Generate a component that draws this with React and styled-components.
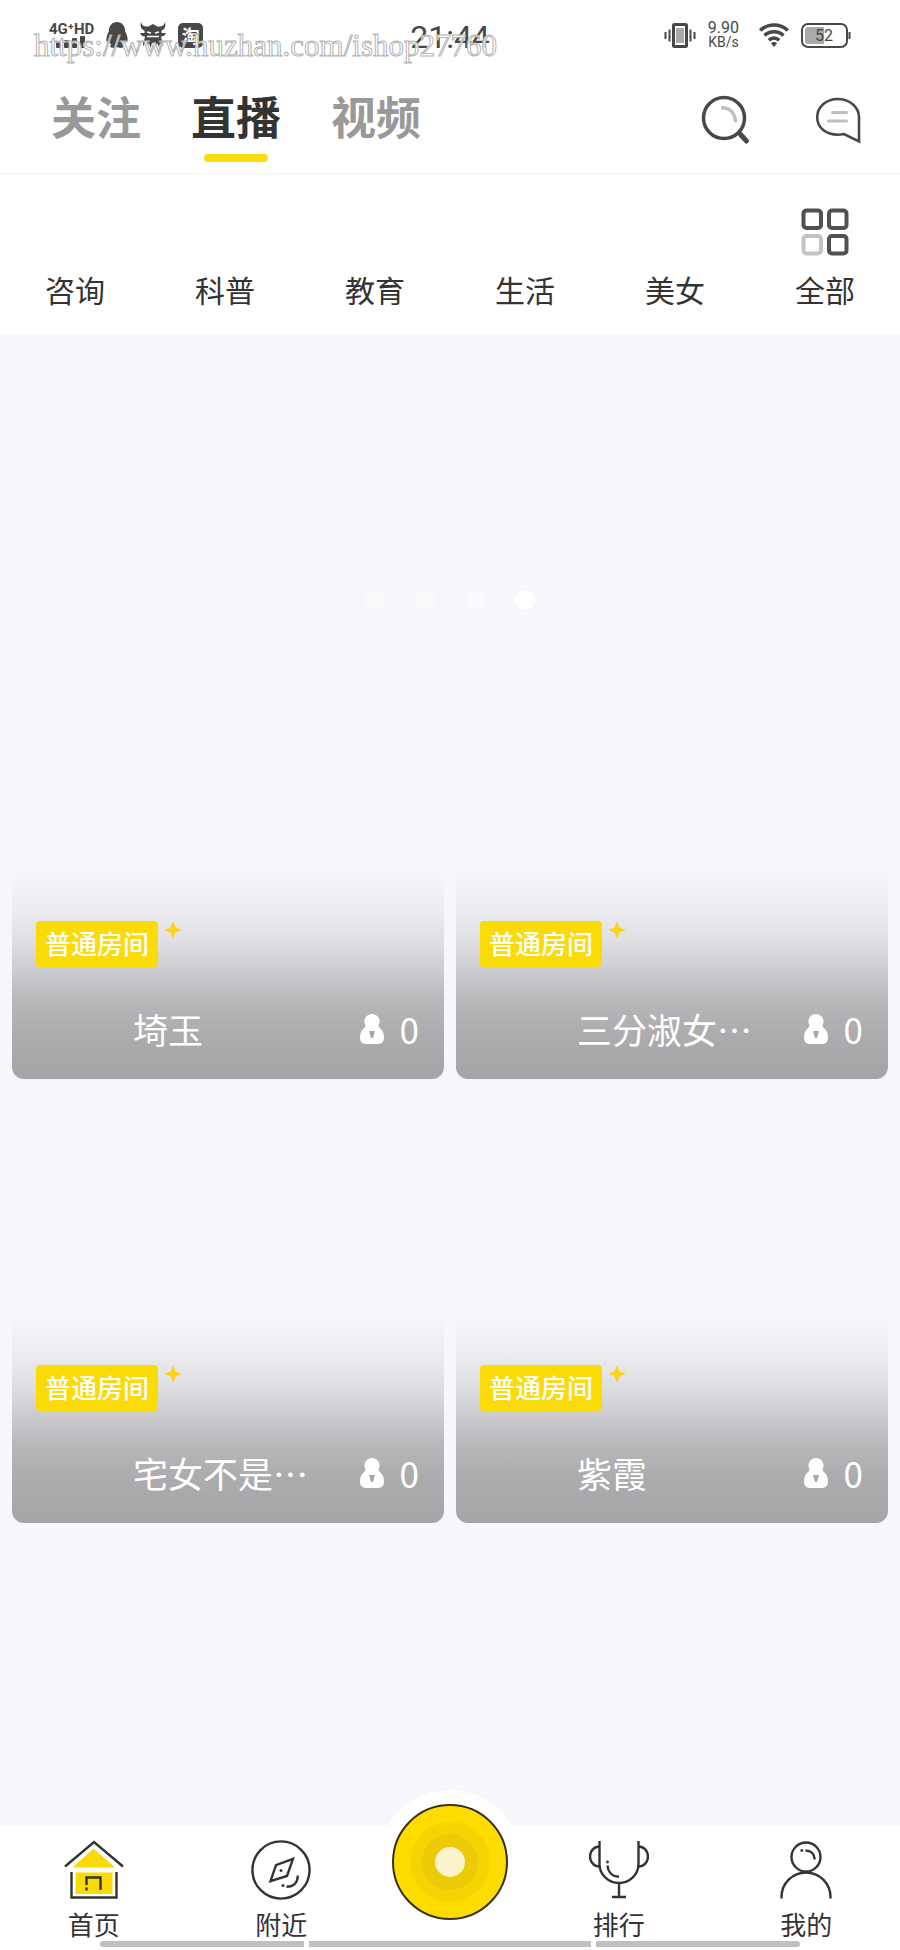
import React, { useState } from 'react'
import styled, { createGlobalStyle } from 'styled-components'

const GlobalStyle = createGlobalStyle`
  * {
    box-sizing: border-box;
  }
  body {
    margin: 0;
    background: #f6f6fb;
    color: #333;
    font-family: 'Noto Sans CJK SC', sans-serif;
  }
  button {
    padding: 0;
    border: 0;
    background: transparent;
    color: inherit;
    font-family: inherit;
    cursor: pointer;
  }
  svg {
    display: block;
    flex: none;
  }
`

const Page = styled.div`
  position: relative;
  display: flex;
  flex-direction: column;
  min-height: 100vh;
`

const Watermark = styled.div`
  position: absolute;
  top: 28px;
  left: 34px;
  z-index: 5;
  font: 31px/36px 'Liberation Serif', serif;
  white-space: nowrap;
  color: rgba(255, 255, 255, 0.85);
  -webkit-text-stroke: 1px #b4b4b4;
  pointer-events: none;
`

const StatusBar = styled.div`
  display: grid;
  grid-template-columns: 1fr auto 1fr;
  align-items: center;
  height: 70px;
  padding: 0 49px;
  background: #fff;
  color: #484848;
  font-family: Roboto, sans-serif;
`

const StatusGroup = styled.div`
  display: flex;
  align-items: center;
  justify-content: ${props => (props.$end ? 'flex-end' : 'flex-start')};
  gap: 12px;
`

const Signal = styled.div`
  display: flex;
  flex-direction: column;
  font-size: 15px;
  font-weight: 700;
  line-height: 14px;
  svg {
    margin-left: 7px;
  }
`

const Clock = styled.time`
  font-size: 32px;
  line-height: 36px;
  padding-top: 4px;
`

const NetSpeed = styled.div`
  text-align: center;
  font-size: 16px;
  line-height: 14px;
  margin-right: 8px;
  small {
    display: block;
    font-size: 14px;
  }
`

const TaoBadge = styled.span`
  width: 25px;
  height: 25px;
  border-radius: 5px;
  background: #484848;
  color: #fff;
  text-align: center;
  font: 700 18px/25px 'Noto Sans CJK SC', sans-serif;
`

const Header = styled.header`
  display: flex;
  justify-content: space-between;
  padding: 18px 38px 11px 51px;
  background: #fff;
  border-bottom: 2px solid #f6f6f6;
`

const Tabs = styled.nav`
  display: flex;
  gap: 50px;
`

const Tab = styled.button`
  display: flex;
  flex-direction: column;
  align-items: center;
  font-size: 45px;
  font-weight: 700;
  line-height: 56px;
  color: ${props => (props.$active ? '#333' : '#999')};
  &::after {
    content: '';
    width: 64px;
    height: 8px;
    margin-top: 10px;
    border-radius: 4px;
    background: ${props => (props.$active ? '#fbdc0c' : 'transparent')};
  }
`

const HeaderActions = styled.div`
  display: flex;
  align-items: flex-start;
  gap: 63px;
  padding-top: 7px;
`

const Categories = styled.nav`
  display: grid;
  grid-template-columns: repeat(6, 1fr);
  height: 160px;
  padding: 32px 0 22px;
  background: #fff;
`

const Category = styled.button`
  display: flex;
  flex-direction: column;
  align-items: center;
  font-size: 30px;
  line-height: 40px;
`

const CategoryIcon = styled.span`
  height: 50px;
  margin-bottom: 12px;
`

const Banner = styled.section`
  display: flex;
  align-items: flex-end;
  justify-content: center;
  gap: 30px;
  height: 300px;
  padding-bottom: 25px;
`

const Dot = styled.button`
  width: 20px;
  height: 20px;
  border-radius: 50%;
  background: ${props => (props.$active ? '#fff' : '#fafafd')};
`

const Feed = styled.main`
  flex: 1;
  display: grid;
  grid-template-columns: 1fr 1fr;
  align-content: start;
  gap: 12px;
  padding: 12px;
`

const RoomCard = styled.article`
  display: flex;
  flex-direction: column;
  justify-content: flex-end;
  aspect-ratio: 1;
  border-radius: 12px;
  overflow: hidden;
`

const RoomShade = styled.div`
  padding: 49px 25px 26px 24px;
  color: #fff;
  background: linear-gradient(
    #f6f6fb 0%,
    #ebebef 20%,
    #dfdfe3 34%,
    #c9c9cd 50%,
    #b8b8ba 62%,
    #acacae 78%,
    #a5a5a7 100%
  );
`

const BadgeRow = styled.div`
  display: flex;
  align-items: flex-start;
  gap: 6px;
  margin-bottom: 38px;
`

const Badge = styled.span`
  height: 46px;
  padding: 0 9px;
  border-radius: 4px;
  background: #fbdb06;
  font-size: 26px;
  font-weight: 500;
  line-height: 44px;
`

const RoomInfo = styled.div`
  display: flex;
  align-items: center;
  gap: 16px;
  font-size: 35px;
  line-height: 48px;
`

const Avatar = styled.span`
  width: 81px;
`

const RoomName = styled.span`
  flex: 1;
  white-space: nowrap;
`

const TabBar = styled.nav`
  position: relative;
  display: grid;
  grid-template-columns: 5fr 5fr 4fr 5fr 5fr;
  height: 125px;
  padding-top: 15px;
  background: #fff;
`

const TabBarItem = styled.button`
  display: flex;
  flex-direction: column;
  align-items: center;
  gap: 4px;
  font-size: 26px;
  line-height: 40px;
`

const LiveButton = styled.button`
  position: absolute;
  top: -35px;
  left: 50%;
  transform: translateX(-50%);
  padding: 14px;
  border-radius: 50%;
  background: #fff;
`

const HomeIndicator = styled.div`
  position: absolute;
  left: 100px;
  right: 100px;
  bottom: 3px;
  display: grid;
  grid-template-columns: 204fr 282fr 204fr;
  gap: 5px;
  height: 6px;
  border-radius: 3px;
  overflow: hidden;
  span {
    background: #c0c0c0;
  }
`

const SignalBars = () => (
  <svg width="32" height="13" viewBox="0 0 32 13" fill="#484848">
    <rect x="0" y="6" width="5" height="6" rx="1" />
    <rect x="8" y="4" width="5" height="8" rx="1" />
    <rect x="16" y="2" width="5" height="10" rx="1" />
    <rect x="24" y="0" width="5" height="12" rx="1" />
  </svg>
)

const PenguinIcon = () => (
  <svg width="22" height="26" viewBox="0 0 22 26" fill="#484848">
    <path d="M11 0C6 0 2.800 4 2.800 9.500 1.500 12 .2 15 .4 18.500c.2 2 1.300 1.500 2.400 0 .4 1.500 1.200 3 2.400 4-1.500.8-1.400 3 .8 3.300 2 .3 4 0 5-.7 1 .7 3 1 5 .7 2.200-.3 2.300-2.500.8-3.300 1.200-1 2-2.500 2.400-4 1.100 1.500 2.200 2 2.400 0 .2-3.500-1.100-6.500-2.400-9C19.200 4 16 0 11 0Z" />
  </svg>
)

const BullIcon = () => (
  <svg width="26" height="26" viewBox="0 0 26 26">
    <path
      fill="#484848"
      d="M1 0C0 5 1 7 4.500 8.500V11H0c1 2.500 2.500 3.500 5 3.500L4 19l-1 1v4l3-3 1 4 2-4 1.500 5 1.500-5h2l1.500 5 1.500-5 2 4 1-4 3 3v-4l-1-1-1-4.500c2.500 0 4-1 5-3.500h-4.500V8.500C25 7 26 5 25 0c-1 3-2 4-4.500 4.500h-3L13 2 8.500 4.500h-3C3 4 2 3 1 0Z"
    />
    <path stroke="#fff" strokeWidth="1.500" d="M7 10l4 1M19 10l-4 1M7 14.500h12" />
  </svg>
)

const VibrateIcon = () => (
  <svg width="32" height="25" viewBox="0 0 32 25" fill="none" stroke="#484848">
    <rect x="9.500" y="1.500" width="13" height="22" rx="1" strokeWidth="3" />
    <path fill="#aaa" stroke="none" d="M12 5h8v15h-8z" />
    <path strokeWidth="2" d="M5.500 6.500v12M1.500 9v7M26.500 6.500v12M30.500 9v7" />
  </svg>
)

const WifiIcon = () => (
  <svg width="30" height="24" viewBox="0 0 30 24" fill="none" stroke="#484848" strokeWidth="3.600">
    <path d="M1.200 7.500C9 .2 21 .2 28.800 7.500M5.500 12.500c5.500-5 13.500-5 19 0M9.800 17.200c3-2.800 7.400-2.800 10.400 0" />
    <path fill="#484848" stroke="none" d="M15 24l-3-3.600c1.500-1.800 4.500-1.800 6 0z" />
  </svg>
)

const BatteryBox = styled.span`
  position: relative;
  width: 50px;
  height: 25px;
  text-align: center;
  font-size: 16px;
  line-height: 25px;
  svg {
    position: absolute;
    inset: 0;
  }
  b {
    position: relative;
    font-weight: 400;
    padding-right: 4px;
  }
`

const Battery = () => (
  <BatteryBox>
    <svg width="50" height="25" viewBox="0 0 50 25" fill="none">
      <rect x="1" y="1" width="45" height="23" rx="6" stroke="#484848" strokeWidth="2" />
      <path fill="#aaa" d="M7 4h16v17H7a3 3 0 0 1-3-3V7a3 3 0 0 1 3-3z" />
      <path stroke="#484848" strokeWidth="2" d="M48.500 9v7" />
    </svg>
    <b>52</b>
  </BatteryBox>
)

const SearchIcon = () => (
  <svg width="50" height="50" viewBox="0 0 50 50" fill="none" strokeLinecap="round">
    <circle cx="23" cy="23" r="20.500" stroke="#484848" strokeWidth="3.500" />
    <path stroke="#484848" strokeWidth="5" d="M39.500 39.500l6 6.500" />
    <path stroke="#c0c0c0" strokeWidth="3.500" d="M21.500 12.800c7 0 12 5 13 13" />
  </svg>
)

const MessageIcon = () => (
  <svg width="48" height="50" viewBox="0 0 48 50" fill="none">
    <path
      stroke="#484848"
      strokeWidth="2.600"
      d="M45 46.500V22.500C45 12 35.500 4 23.800 4S3.200 12 3.200 22.500s9.300 17.200 20.600 17.200c2.600 0 4.200-.3 6.200-.7z"
    />
    <path stroke="#c0c0c0" strokeWidth="3" strokeLinecap="round" d="M18.500 17.500h14M14.500 26h18" />
  </svg>
)

const GridIcon = () => (
  <svg width="50" height="50" viewBox="0 0 50 50" fill="none" stroke="#505050" strokeWidth="4">
    <rect x="3.500" y="3.500" width="17.500" height="17.500" rx="3" />
    <rect x="29" y="3.500" width="17.500" height="17.500" rx="3" />
    <rect x="3.500" y="29" width="17.500" height="17.500" rx="3" stroke="#c4c4c4" />
    <rect x="29" y="29" width="17.500" height="17.500" rx="3" />
  </svg>
)

const Sparkle = () => (
  <svg width="18" height="18" viewBox="0 0 18 18" fill="#fbd41a">
    <path d="M9 0l2.500 6.500 6.500 2.500-6.500 2.500-2.500 6.500-2.500-6.500-6.500-2.500 6.500-2.500z" />
  </svg>
)

const ViewerIcon = () => (
  <svg width="24" height="30" viewBox="0 0 24 30">
    <path
      fill="#fff"
      d="M12 0a7.500 7.500 0 0 0-6.800 10.800c.8 1.500 0 2.200-1.700 3.700C1 16.800 0 20 0 23.500 0 28 2.500 30 6.500 30h11c4 0 6.500-2 6.500-6.500 0-3.500-1-6.700-3.500-9-1.700-1.500-2.500-2.200-1.700-3.700A7.500 7.500 0 0 0 12 0Z"
    />
    <path fill="#a8a8aa" d="M9 17h6l-2 7h-2z" />
  </svg>
)

const HomeIcon = () => (
  <svg width="60" height="60" viewBox="0 0 60 60" fill="none" stroke="#333" strokeWidth="2.400">
    <path fill="#fbdb06" stroke="none" d="M29.500 8.500L51 27.500H8.500zM11.500 32.500h37V54h-37z" />
    <path d="M1 26.500L30 2l29 24.500M7.500 32v25.500h45V32" />
    <path d="M22.500 45V37.500h14V50M22.500 47.500v3" />
  </svg>
)

const CompassIcon = () => (
  <svg width="60" height="60" viewBox="0 0 60 60" fill="none" stroke="#333" strokeWidth="2.400">
    <circle cx="30" cy="30" r="28.600" />
    <path d="M42 18.800l-17 6.400-5.500 16L36 36z" />
    <path d="M35.500 46.800C43 46.800 46.800 42 46.800 35.500" />
    <circle cx="30" cy="30.500" r="1.500" fill="#333" stroke="none" />
    <circle cx="32" cy="45.600" r="1.500" fill="#333" stroke="none" />
  </svg>
)

const TrophyIcon = () => (
  <svg width="60" height="60" viewBox="0 0 60 60" fill="none" stroke="#333" strokeWidth="2.400">
    <path d="M10.500 1v23a19.500 19 0 0 0 39 0V1M30 43v14M23 57h14" />
    <path d="M10.500 6.500a9.500 10 0 0 0 0 20M49.500 6.500a9.500 10 0 0 1 0 20" />
    <path d="M18.500 25.500C19 32 23 36.500 30 36.800" />
    <circle cx="18.500" cy="22" r="1.400" fill="#333" stroke="none" />
  </svg>
)

const MineIcon = () => (
  <svg width="60" height="60" viewBox="0 0 60 60" fill="none" stroke="#333" strokeWidth="2.400">
    <circle cx="30" cy="17" r="14.500" />
    <path d="M5.500 58.500V57a24.500 24.500 0 0 1 49 0v1.500" />
    <path d="M29.500 10.500c5.500 0 9 3.500 9.200 9" />
    <circle cx="25.800" cy="10.500" r="1.400" fill="#333" stroke="none" />
  </svg>
)

const LiveIcon = () => (
  <svg width="116" height="116" viewBox="0 0 116 116">
    <circle cx="58" cy="58" r="57" fill="#fddc00" stroke="#3a3014" strokeWidth="2" />
    <circle cx="58" cy="58" r="40" fill="#f5d403" />
    <circle cx="58" cy="58" r="28" fill="#ebcb07" />
    <circle cx="58" cy="58" r="15" fill="#f9f4cc" />
  </svg>
)

const tabs = ['关注', '直播', '视频']

const categories = [
  { label: '咨询' },
  { label: '科普' },
  { label: '教育' },
  { label: '生活' },
  { label: '美女' },
  { label: '全部', icon: <GridIcon /> }
]

const rooms = [
  { name: '埼玉', viewers: 0 },
  { name: '三分淑女…', viewers: 0 },
  { name: '宅女不是…', viewers: 0 },
  { name: '紫霞', viewers: 0 }
]

const Room = ({ name, viewers }) => (
  <RoomCard>
    <RoomShade>
      <BadgeRow>
        <Badge>普通房间</Badge>
        <Sparkle />
      </BadgeRow>
      <RoomInfo>
        <Avatar />
        <RoomName>{name}</RoomName>
        <ViewerIcon />
        <span>{viewers}</span>
      </RoomInfo>
    </RoomShade>
  </RoomCard>
)

const App = () => {
  const [activeTab, setActiveTab] = useState('直播')
  const [slide, setSlide] = useState(3)
  return (
    <Page lang="zh-CN">
      <GlobalStyle />
      <StatusBar>
        <StatusGroup>
          <Signal>
            4G⁺HD
            <SignalBars />
          </Signal>
          <PenguinIcon />
          <BullIcon />
          <TaoBadge>淘</TaoBadge>
        </StatusGroup>
        <Clock>21:44</Clock>
        <StatusGroup $end>
          <VibrateIcon />
          <NetSpeed>
            9.90
            <small>KB/s</small>
          </NetSpeed>
          <WifiIcon />
          <Battery />
        </StatusGroup>
      </StatusBar>
      <Watermark>https://www.huzhan.com/ishop27760</Watermark>
      <Header>
        <Tabs>
          {tabs.map(tab => (
            <Tab
              key={tab}
              type="button"
              $active={tab === activeTab}
              onClick={() => setActiveTab(tab)}
            >
              {tab}
            </Tab>
          ))}
        </Tabs>
        <HeaderActions>
          <button type="button" aria-label="搜索">
            <SearchIcon />
          </button>
          <button type="button" aria-label="消息">
            <MessageIcon />
          </button>
        </HeaderActions>
      </Header>
      <Categories>
        {categories.map(({ label, icon }) => (
          <Category key={label} type="button">
            <CategoryIcon>{icon}</CategoryIcon>
            {label}
          </Category>
        ))}
      </Categories>
      <Banner>
        {[0, 1, 2, 3].map(i => (
          <Dot
            key={i}
            type="button"
            aria-label={`${i + 1}`}
            $active={i === slide}
            onClick={() => setSlide(i)}
          />
        ))}
      </Banner>
      <Feed>
        {rooms.map(room => (
          <Room key={room.name} {...room} />
        ))}
      </Feed>
      <TabBar>
        <TabBarItem type="button">
          <HomeIcon />
          首页
        </TabBarItem>
        <TabBarItem type="button">
          <CompassIcon />
          附近
        </TabBarItem>
        <span />
        <TabBarItem type="button">
          <TrophyIcon />
          排行
        </TabBarItem>
        <TabBarItem type="button">
          <MineIcon />
          我的
        </TabBarItem>
        <LiveButton type="button" aria-label="开播">
          <LiveIcon />
        </LiveButton>
        <HomeIndicator>
          <span />
          <span />
          <span />
        </HomeIndicator>
      </TabBar>
    </Page>
  )
}

export default App
